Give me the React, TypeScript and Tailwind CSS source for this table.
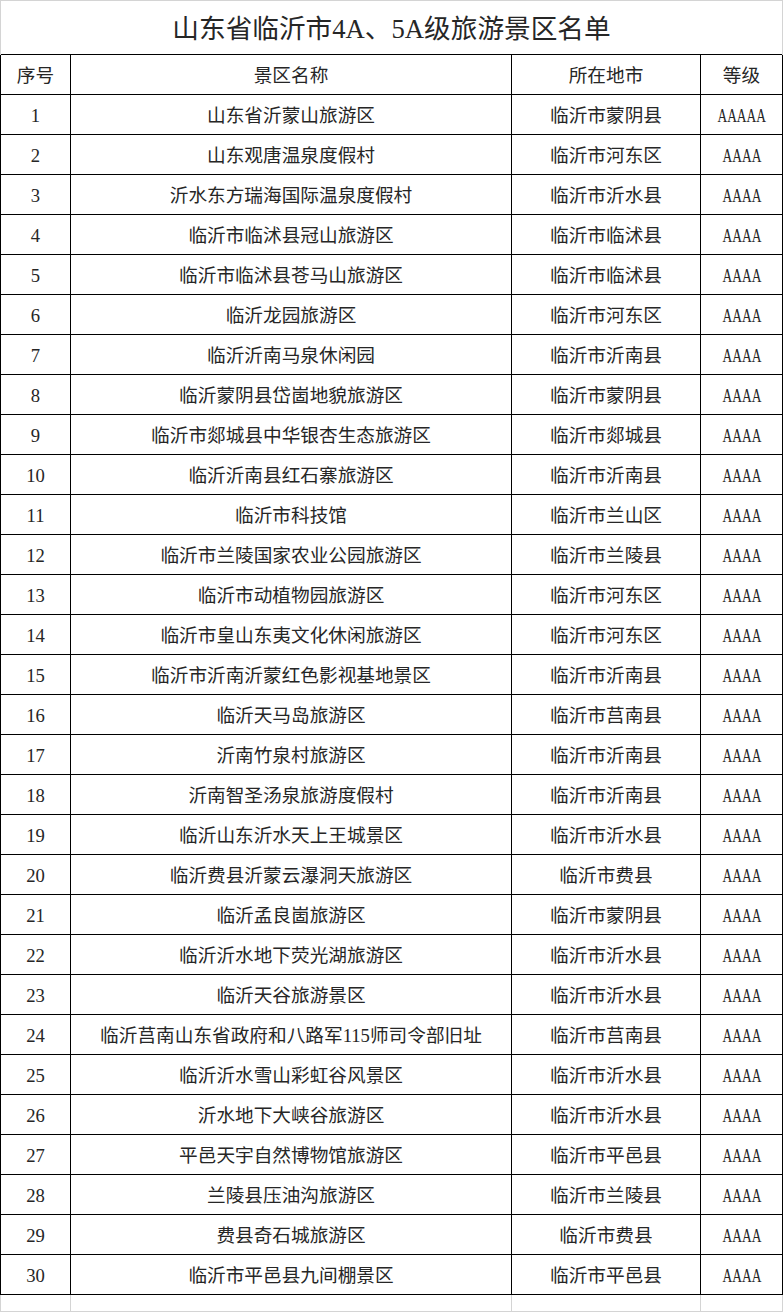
const rows: [string, string, string][] = [
  ["山东省沂蒙山旅游区", "临沂市蒙阴县", "AAAAA"],
  ["山东观唐温泉度假村", "临沂市河东区", "AAAA"],
  ["沂水东方瑞海国际温泉度假村", "临沂市沂水县", "AAAA"],
  ["临沂市临沭县冠山旅游区", "临沂市临沭县", "AAAA"],
  ["临沂市临沭县苍马山旅游区", "临沂市临沭县", "AAAA"],
  ["临沂龙园旅游区", "临沂市河东区", "AAAA"],
  ["临沂沂南马泉休闲园", "临沂市沂南县", "AAAA"],
  ["临沂蒙阴县岱崮地貌旅游区", "临沂市蒙阴县", "AAAA"],
  ["临沂市郯城县中华银杏生态旅游区", "临沂市郯城县", "AAAA"],
  ["临沂沂南县红石寨旅游区", "临沂市沂南县", "AAAA"],
  ["临沂市科技馆", "临沂市兰山区", "AAAA"],
  ["临沂市兰陵国家农业公园旅游区", "临沂市兰陵县", "AAAA"],
  ["临沂市动植物园旅游区", "临沂市河东区", "AAAA"],
  ["临沂市皇山东夷文化休闲旅游区", "临沂市河东区", "AAAA"],
  ["临沂市沂南沂蒙红色影视基地景区", "临沂市沂南县", "AAAA"],
  ["临沂天马岛旅游区", "临沂市莒南县", "AAAA"],
  ["沂南竹泉村旅游区", "临沂市沂南县", "AAAA"],
  ["沂南智圣汤泉旅游度假村", "临沂市沂南县", "AAAA"],
  ["临沂山东沂水天上王城景区", "临沂市沂水县", "AAAA"],
  ["临沂费县沂蒙云瀑洞天旅游区", "临沂市费县", "AAAA"],
  ["临沂孟良崮旅游区", "临沂市蒙阴县", "AAAA"],
  ["临沂沂水地下荧光湖旅游区", "临沂市沂水县", "AAAA"],
  ["临沂天谷旅游景区", "临沂市沂水县", "AAAA"],
  ["临沂莒南山东省政府和八路军115师司令部旧址", "临沂市莒南县", "AAAA"],
  ["临沂沂水雪山彩虹谷风景区", "临沂市沂水县", "AAAA"],
  ["沂水地下大峡谷旅游区", "临沂市沂水县", "AAAA"],
  ["平邑天宇自然博物馆旅游区", "临沂市平邑县", "AAAA"],
  ["兰陵县压油沟旅游区", "临沂市兰陵县", "AAAA"],
  ["费县奇石城旅游区", "临沂市费县", "AAAA"],
  ["临沂市平邑县九间棚景区", "临沂市平邑县", "AAAA"],
];

const cell = "border border-black text-center align-middle p-0 pt-[3px]";
const gray = "border border-[#d4d4d4] p-0";

function Grade({ value }: { value: string }) {
  return (
    <span className="inline-block scale-x-[0.72] origin-center text-[18.67px]">{value}</span>
  );
}

export default function App() {
  return (
    <div
      className="w-[783px] bg-white text-[#262626] text-[18.67px] leading-none"
      style={{ fontFamily: '"Liberation Serif", "Noto Sans CJK SC", serif' }}
    >
      <table className="table-fixed border-collapse w-[782px]">
        <colgroup>
          <col className="w-[70px]" />
          <col className="w-[441px]" />
          <col className="w-[189px]" />
          <col className="w-[82px]" />
        </colgroup>
        <tbody>
          <tr className="h-[54px]">
            <td
              colSpan={4}
              className="border-t border-l border-r border-[#d4d4d4] border-b-black text-center align-middle text-[26.67px] pt-1"
            >
              山东省临沂市4A、5A级旅游景区名单
            </td>
          </tr>
          <tr className="h-[40px]">
            <td className={cell}>序号</td>
            <td className={cell}>景区名称</td>
            <td className={cell}>所在地市</td>
            <td className={cell}>等级</td>
          </tr>
          {rows.map(([name, city, grade], i) => (
            <tr key={i} className="h-[40px]">
              <td className={cell}>{i + 1}</td>
              <td className={cell}>{name}</td>
              <td className={cell}>{city}</td>
              <td className={cell}>
                <Grade value={grade} />
              </td>
            </tr>
          ))}
          <tr className="h-[17px]">
            <td className={`${gray} border-t-black`} />
            <td className={`${gray} border-t-black`} />
            <td className={`${gray} border-t-black`} />
            <td className={`${gray} border-t-black`} />
          </tr>
        </tbody>
      </table>
    </div>
  );
}
